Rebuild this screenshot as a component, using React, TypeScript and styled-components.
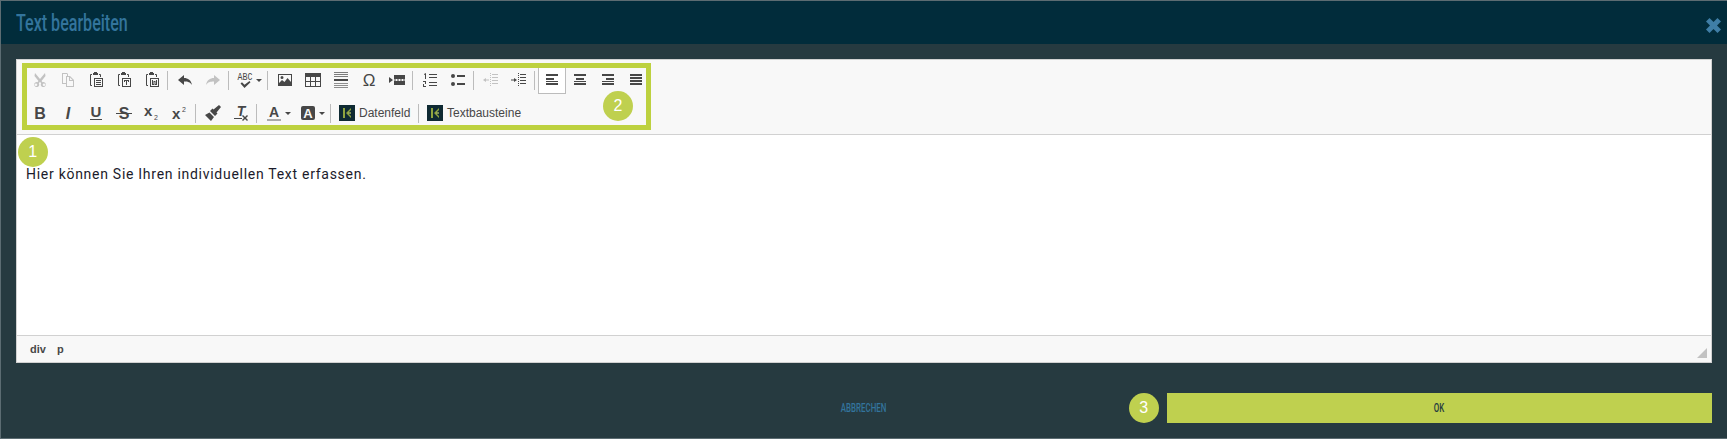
import React from "react";
import styled, { createGlobalStyle } from "styled-components";

const GlobalStyle = createGlobalStyle`
  html, body {
    margin: 0;
    padding: 0;
    background: #5c6c72;
  }
`;

const Modal = styled.div`
  margin: 1px 0 1px 1px;
  height: 437px;
  background: #263a40;
  display: flex;
  flex-direction: column;
`;

const Header = styled.div`
  height: 43px;
  flex: none;
  background: #012c3b;
  display: flex;
  align-items: center;
  justify-content: space-between;
  padding: 0 6px 0 15px;
`;

const Title = styled.div`
  font-family: "Roboto", sans-serif;
  font-size: 24px;
  font-weight: 500;
  color: #33749c;
  transform: scaleX(0.67);
  transform-origin: left center;
`;

const Close = styled.svg`
  width: 15px;
  height: 15px;
  margin-top: 6px;
`;

const Body = styled.div`
  padding: 15px 15px 0;
`;

const Panel = styled.div`
  height: 304px;
  box-sizing: border-box;
  border: 1px solid #d1d1d1;
  display: flex;
  flex-direction: column;
  background: #fff;
`;

const Toolbar = styled.div`
  position: relative;
  height: 75px;
  box-sizing: border-box;
  flex: none;
  background: #f8f8f8;
  border-bottom: 1px solid #d1d1d1;
  padding: 6px 9px 0;
  display: flex;
  flex-direction: column;
  gap: 5px;
`;

const Row = styled.div`
  display: flex;
  height: 28px;
  align-items: stretch;
`;

const Tool = styled.div<{ $wide?: number; $active?: boolean; $off?: boolean }>`
  width: ${(p) => p.$wide ?? 28}px;
  box-sizing: border-box;
  display: flex;
  align-items: center;
  justify-content: center;
  color: #474747;
  opacity: ${(p) => (p.$off ? 0.3 : 1)};
  background: ${(p) => (p.$active ? "#fff" : "transparent")};
  border: 1px solid ${(p) => (p.$active ? "#bcbcbc" : "transparent")};
  font-family: "Liberation Sans", sans-serif;
`;

const Sep = styled.div`
  width: 1px;
  height: 19px;
  background: #bcbcbc;
  margin: 5px 3px 0 1px;
`;

const Icon = styled.svg`
  width: 16px;
  height: 16px;
  flex: none;
  fill: currentColor;
  overflow: visible;
`;

const Caret = styled.span`
  width: 0;
  height: 0;
  margin-left: 3px;
  border-left: 3px solid transparent;
  border-right: 3px solid transparent;
  border-top: 3px solid #474747;
`;

const Plugin = styled.div<{ $wide: number }>`
  width: ${(p) => p.$wide}px;
  display: flex;
  align-items: center;
  gap: 4px;
  padding-left: 5px;
  box-sizing: border-box;
  font-family: "Liberation Sans", sans-serif;
  font-size: 12px;
  color: #474747;
`;

const Highlight = styled.div`
  position: absolute;
  left: 5px;
  top: 3px;
  width: 629px;
  height: 67px;
  box-sizing: border-box;
  border: 5px solid #bdd13f;
`;

const Badge = styled.div<{ $left: number; $top: number }>`
  position: absolute;
  left: ${(p) => p.$left}px;
  top: ${(p) => p.$top}px;
  width: 30px;
  height: 30px;
  border-radius: 50%;
  background: #bfd04f;
  color: #fff;
  font-family: "Liberation Sans", sans-serif;
  font-size: 16px;
  display: flex;
  align-items: center;
  justify-content: center;
`;

const Content = styled.div`
  position: relative;
  flex: 1;
  background: #fff;
  padding: 29px 9px 0;
  font-family: "Roboto", sans-serif;
  font-size: 14px;
  line-height: 20px;
  letter-spacing: 0.72px;
  color: #1b1b2b;
`;

const PathBar = styled.div`
  position: relative;
  height: 27px;
  box-sizing: border-box;
  flex: none;
  background: #f8f8f8;
  border-top: 1px solid #d1d1d1;
  padding: 0 13px;
  display: flex;
  align-items: center;
  gap: 11px;
  font-family: "Liberation Sans", sans-serif;
  font-size: 11px;
  font-weight: bold;
  color: #484848;
`;

const Resize = styled.div`
  position: absolute;
  right: 4px;
  bottom: 4px;
  width: 0;
  height: 0;
  border-left: 10px solid transparent;
  border-bottom: 10px solid #c2c2c2;
`;

const Footer = styled.div`
  display: grid;
  grid-template-columns: repeat(3, 1fr);
  gap: 30px;
  padding: 30px 15px 0;
  height: 30px;
`;

const FooterLabel = styled.span`
  font-family: "Roboto", sans-serif;
  font-size: 12px;
  font-weight: 500;
  transform: scaleX(0.66);
`;

const CancelButton = styled.div`
  grid-column: 2;
  display: flex;
  align-items: center;
  justify-content: center;
  color: #33749c;
`;

const OkButton = styled.div`
  position: relative;
  display: flex;
  align-items: center;
  justify-content: center;
  background: #bfd04f;
  color: #263a40;
`;

const Glyph = ({ children, size = 14, weight = "bold", italic = false, y = 13 }: {
  children: string; size?: number; weight?: string; italic?: boolean; y?: number;
}) => (
  <text
    x="8"
    y={y}
    fontSize={size}
    fontWeight={weight}
    fontStyle={italic ? "italic" : "normal"}
    textAnchor="middle"
    fontFamily="Liberation Sans, sans-serif"
  >
    {children}
  </text>
);

// clipboard bracket with a sheet over its lower right corner
const Clipboard = ({ children }: { children?: React.ReactNode }) => (
  <Icon viewBox="0 0 16 16">
    <path d="M6 0h3v1h1v2H5V1h1zM2 2h2v1H3v10h1v1H3a1 1 0 0 1-1-1V3a1 1 0 0 1 1-1zM11 2h1a1 1 0 0 1 1 1v2h-1V3h-1z" />
    <path d="M6 6h9v9H6zm1 1v7h7V7z" fillRule="evenodd" />
    {children}
  </Icon>
);

const icons: Record<string, React.ReactNode> = {
  cut: (
    <Icon viewBox="0 0 16 16">
      <path d="M3 1l5 6 5-6 .5 3L9.500 9l1 1.200a2.500 2.500 0 1 1-1.300 1L8 9.800l-1.200 1.400a2.500 2.500 0 1 1-1.300-1L6.500 9 2.500 4zM4 11.500a1.300 1.300 0 1 0 0 2.600 1.300 1.300 0 0 0 0-2.600zm8 0a1.300 1.300 0 1 0 0 2.600 1.300 1.300 0 0 0 0-2.600z" fillRule="evenodd" />
    </Icon>
  ),
  copy: (
    <Icon viewBox="0 0 16 16">
      <path d="M2 1h5l1 1v2h2l4 4v7H6v-3H2zm1 1v9h3V4h1V2zm4 3v9h6V9h-4V5zm3 .5V8h2.500z" fillRule="evenodd" />
    </Icon>
  ),
  paste: (
    <Clipboard>
      <path d="M8 8h5v1H8zM8 10h5v1H8zM8 12h5v1H8z" />
    </Clipboard>
  ),
  pasteText: (
    <Clipboard>
      <path d="M8 8h5v2h-1V9h-1v4h-1V9H9v1H8z" />
    </Clipboard>
  ),
  pasteWord: (
    <Clipboard>
      <path d="M8 8h1v4h.5V9h2v3h.5V8h1v5h-2.500v-3h-.500v3H8z" />
    </Clipboard>
  ),
  undo: (
    <Icon viewBox="0 0 16 16">
      <path d="M7 3v3c4 0 7 2 8 7-2-3-4-3.500-8-3.500V13L1 8z" />
    </Icon>
  ),
  redo: (
    <Icon viewBox="0 0 16 16">
      <path d="M9 3v3c-4 0-7 2-8 7 2-3 4-3.500 8-3.500V13l6-5z" />
    </Icon>
  ),
  spell: (
    <Icon viewBox="0 0 16 16">
      <text x="8" y="8" fontSize="11" textAnchor="middle" textLength="15" lengthAdjust="spacingAndGlyphs" fontFamily="Liberation Mono, monospace">ABC</text>
      <path d="M3.500 11.500l1.500-1.200 2.500 2.500 5-3.800 1 1.200L7.500 16z" />
    </Icon>
  ),
  image: (
    <Icon viewBox="0 0 16 16">
      <path d="M1 2h14v12H1zm1 1v8l3-3 2.500 2 3-4 3.500 4V3zm3 1a1.500 1.500 0 1 1 0 3 1.500 1.500 0 0 1 0-3z" fillRule="evenodd" />
    </Icon>
  ),
  table: (
    <Icon viewBox="0 0 16 16">
      <path d="M0 1h16v14H0zm1 4v4h4V5zm5 0v4h4V5zm5 0v4h4V5zM1 10v4h4v-4zm5 0v4h4v-4zm5 0v4h4v-4z" fillRule="evenodd" />
    </Icon>
  ),
  hr: (
    <Icon viewBox="0 0 16 16">
      <path d="M1 0h14v1H1zM1 2h14v1H1zM1 4h14v1H1zM1 7h14v2H1z" opacity=".7" />
      <path d="M1 7h14v2H1z" />
      <path d="M1 11h14v1H1zM1 13h14v1H1zM1 15h14v1H1z" opacity=".6" />
    </Icon>
  ),
  omega: (
    <Icon viewBox="0 0 16 16">
      <Glyph size={17} y={14} weight="normal">Ω</Glyph>
    </Icon>
  ),
  pageBreak: (
    <Icon viewBox="0 0 16 16">
      <path d="M0 5l4 3-4 3zM5 3h11v4H5zM5 9h11v4H5z" />
      <path d="M5 7.500h2v1H5zM8 7.500h2v1H8zM11 7.500h2v1h-2zM14 7.500h2v1h-2z" />
    </Icon>
  ),
  ol: (
    <Icon viewBox="0 0 16 16">
      <path d="M7 2h8v1H7zM7 5h8v1H7zM7 10h8v1H7zM7 13h8v1H7z" />
      <path d="M2 2l2-1v6H3V2.500L2 3zM1 9h3v3H2v2h2v1H1v-3h2v-2H1z" />
    </Icon>
  ),
  ul: (
    <Icon viewBox="0 0 16 16">
      <circle cx="3" cy="4" r="2" />
      <circle cx="3" cy="12" r="2" />
      <path d="M7 3h8v2H7zM7 11h8v2H7z" />
    </Icon>
  ),
  outdent: (
    <Icon viewBox="0 0 16 16">
      <path d="M7 1h1v1H7zM7 3h1v1H7zM7 5h1v1H7zM7 7h1v1H7zM7 9h1v1H7zM7 11h1v1H7zM7 13h1v1H7zM9 2h6v1H9zM9 5h6v1H9zM9 8h6v1H9zM9 11h6v1H9zM3 7.500h3v1H3V10L0 8l3-2z" />
    </Icon>
  ),
  indent: (
    <Icon viewBox="0 0 16 16">
      <path d="M7 1h1v1H7zM7 3h1v1H7zM7 5h1v1H7zM7 7h1v1H7zM7 9h1v1H7zM7 11h1v1H7zM7 13h1v1H7zM9 2h6v1H9zM9 5h6v1H9zM9 8h6v1H9zM9 11h6v1H9zM0 7.500h3V6l3 2-3 2V8.500H0z" />
    </Icon>
  ),
  alignLeft: <Icon viewBox="0 0 16 16"><path d="M2 2h12v2H2zM2 6h8v2H2zM2 9h12v1H2zM2 11h12v2H2z" /></Icon>,
  alignCenter: <Icon viewBox="0 0 16 16"><path d="M2 2h12v2H2zM4 6h8v2H4zM2 9h12v1H2zM2 11h12v2H2z" /></Icon>,
  alignRight: <Icon viewBox="0 0 16 16"><path d="M2 2h12v2H2zM6 6h8v2H6zM2 9h12v1H2zM2 11h12v2H2z" /></Icon>,
  justify: <Icon viewBox="0 0 16 16"><path d="M2 2h12v2H2zM2 5h12v2H2zM2 8h12v2H2zM2 11h12v2H2z" /></Icon>,
  bold: <Icon viewBox="0 0 16 16"><Glyph size={16} y={14}>B</Glyph></Icon>,
  italic: <Icon viewBox="0 0 16 16"><Glyph size={16} y={14} italic>I</Glyph></Icon>,
  underline: (
    <Icon viewBox="0 0 16 16">
      <Glyph size={15} y={12}>U</Glyph>
      <path d="M2 14h12v1H2z" />
    </Icon>
  ),
  strike: (
    <Icon viewBox="0 0 16 16">
      <Glyph size={16} y={14}>S</Glyph>
      <path d="M0 8h16v1H0z" />
    </Icon>
  ),
  sub: (
    <Icon viewBox="0 0 16 16">
      <text x="0" y="11" fontSize="15" fontWeight="bold" fontFamily="Liberation Sans, sans-serif">x</text>
      <text x="10" y="15" fontSize="7" fontFamily="Liberation Sans, sans-serif">2</text>
    </Icon>
  ),
  sup: (
    <Icon viewBox="0 0 16 16">
      <text x="0" y="14" fontSize="15" fontWeight="bold" fontFamily="Liberation Sans, sans-serif">x</text>
      <text x="10" y="7" fontSize="7" fontFamily="Liberation Sans, sans-serif">2</text>
    </Icon>
  ),
  brush: (
    <Icon viewBox="0 0 16 16">
      <path d="M14 0l2 2-4.500 5.500 1 1-2.500 2.500-5-5L7.500 3.500l1 1zM4.500 7.500l4.500 4.500L6 16 0 10z" />
    </Icon>
  ),
  clear: (
    <Icon viewBox="0 0 16 16">
      <Glyph size={14} y={11} italic>T</Glyph>
      <path d="M1 13h8v1H1zM10 10l2 2 2-2 1 1-2 2 2 2-1 1-2-2-2 2-1-1 2-2-2-2z" />
    </Icon>
  ),
  color: (
    <Icon viewBox="0 0 16 16">
      <Glyph size={14} y={12}>A</Glyph>
      <path d="M1 14h14v2H1z" fill="#a9a9a9" />
    </Icon>
  ),
  bgColor: (
    <Icon viewBox="0 0 16 16">
      <rect x="1" y="1" width="14" height="14" rx="2" />
      <text x="8" y="13" fontSize="13" fontWeight="bold" textAnchor="middle" fill="#f8f8f8" fontFamily="Liberation Sans, sans-serif">A</text>
    </Icon>
  ),
};

const Logo = () => (
  <Icon viewBox="0 0 16 16">
    <rect width="16" height="16" fill="#0f2a33" />
    <path d="M4 3h2v10H4z" fill="#8fa53f" />
    <path d="M12 3v2L9 8l3 3v2L7 8z" fill="#8fa53f" />
    <path d="M9 7h3v2H9z" fill="#c4d46a" opacity=".6" />
  </Icon>
);

type Item = { icon: string; wide?: number; off?: boolean; active?: boolean; caret?: boolean };

const rowOne: Item[][] = [
  [{ icon: "cut", off: true }, { icon: "copy", off: true }, { icon: "paste" }, { icon: "pasteText" }, { icon: "pasteWord" }],
  [{ icon: "undo" }, { icon: "redo", off: true }],
  [{ icon: "spell", wide: 34, caret: true }],
  [{ icon: "image" }, { icon: "table" }, { icon: "hr" }, { icon: "omega" }, { icon: "pageBreak" }],
  [{ icon: "ol" }, { icon: "ul" }],
  [{ icon: "outdent", off: true }, { icon: "indent" }],
  [{ icon: "alignLeft", active: true }, { icon: "alignCenter" }, { icon: "alignRight" }, { icon: "justify" }],
];

const rowTwo: Item[][] = [
  [{ icon: "bold" }, { icon: "italic" }, { icon: "underline" }, { icon: "strike" }, { icon: "sub" }, { icon: "sup" }],
  [{ icon: "brush", wide: 27 }, { icon: "clear", wide: 29 }],
  [{ icon: "color", wide: 36, caret: true }, { icon: "bgColor", wide: 33, caret: true }],
];

const renderGroups = (groups: Item[][]) =>
  groups.map((group, i) => (
    <React.Fragment key={i}>
      {i > 0 && <Sep />}
      {group.map((item) => (
        <Tool key={item.icon} $wide={item.wide} $off={item.off} $active={item.active}>
          {icons[item.icon]}
          {item.caret && <Caret />}
        </Tool>
      ))}
    </React.Fragment>
  ));

export default function App() {
  return (
    <>
      <GlobalStyle />
      <Modal>
        <Header>
          <Title>Text bearbeiten</Title>
          <Close viewBox="0 0 15 15">
            <path d="M3.500 0L7.500 4l4-4L15 3.500l-4 4 4 4L11.500 15l-4-4-4 4L0 11.500l4-4-4-4z" fill="#3f7ea6" />
          </Close>
        </Header>
        <Body>
          <Panel>
            <Toolbar>
              <Row>{renderGroups(rowOne)}</Row>
              <Row>
                {renderGroups(rowTwo)}
                <Sep />
                <Plugin $wide={83}>
                  <Logo />
                  Datenfeld
                </Plugin>
                <Sep />
                <Plugin $wide={110}>
                  <Logo />
                  Textbausteine
                </Plugin>
              </Row>
              <Highlight />
              <Badge $left={586} $top={31}>2</Badge>
            </Toolbar>
            <Content>
              <Badge $left={1} $top={2}>1</Badge>
              Hier können Sie Ihren individuellen Text erfassen.
            </Content>
            <PathBar>
              <span>div</span>
              <span>p</span>
              <Resize />
            </PathBar>
          </Panel>
        </Body>
        <Footer>
          <CancelButton>
            <FooterLabel>ABBRECHEN</FooterLabel>
          </CancelButton>
          <OkButton>
            <Badge $left={-38} $top={0}>3</Badge>
            <FooterLabel>OK</FooterLabel>
          </OkButton>
        </Footer>
      </Modal>
    </>
  );
}
